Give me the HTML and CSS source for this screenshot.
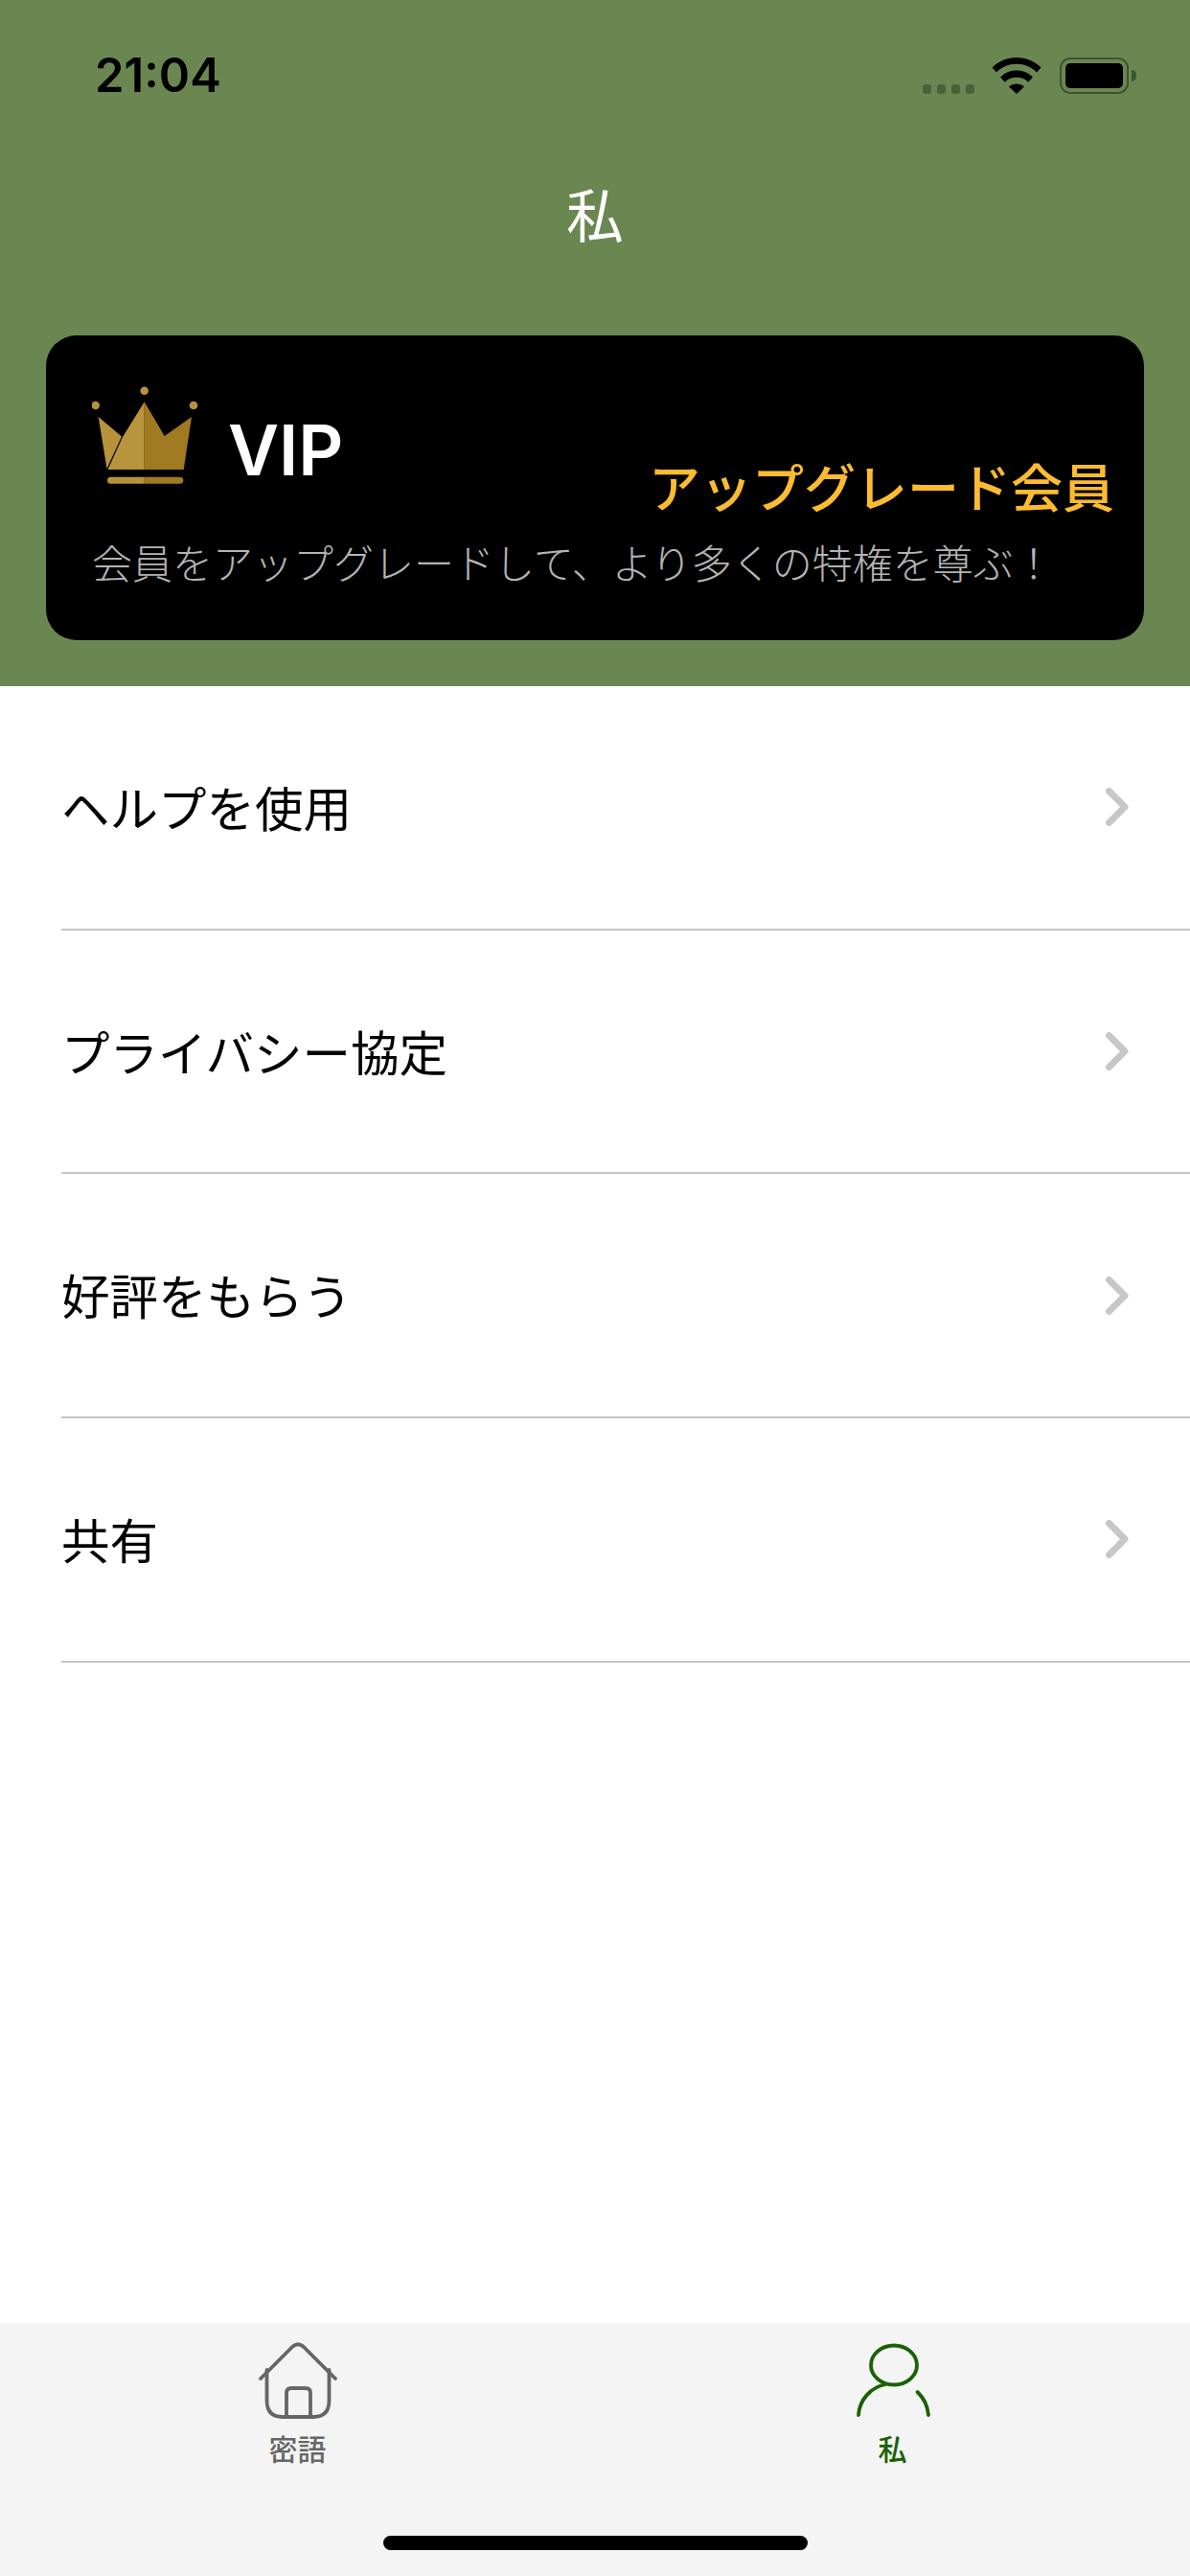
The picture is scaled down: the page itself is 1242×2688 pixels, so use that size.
FILE: index.html
```html
<!DOCTYPE html>
<html lang="ja">
<head>
<meta charset="utf-8">
<title>私</title>
<link rel="stylesheet" href="styles.css">
</head>
<body>
<div class="app">
  <header class="header">
    <div class="status">
      <span class="time">21:04</span>
      <div class="status-icons">
        <div class="signal"><i></i><i></i><i></i><i></i></div>
        <svg class="wifi" viewBox="0 0 52 38"><path d="M26 0C16 0 7.500 3.600 0.500 10.500L5 15.500C10.500 10 17.800 6.800 26 6.800S41.500 10 47 15.500L51.500 10.500C44.500 3.600 36 0 26 0Z"/><path d="M26 13.500C19.500 13.500 13.500 16 9 20.500L13.700 25.700C16.800 22.700 21 20.800 26 20.800S35.200 22.700 38.300 25.700L43 20.500C38.500 16 32.500 13.500 26 13.500Z"/><path d="M26 27.500C23 27.500 20 28.700 18 30.500L26 38L34 30.500C32 28.700 29 27.500 26 27.500Z"/></svg>
        <div class="battery"><div class="battery-shell"><div class="battery-fill"></div></div><div class="battery-nub"></div></div>
      </div>
    </div>
    <h1 class="title">私</h1>
    <section class="card">
      <div class="card-top">
        <svg class="crown" viewBox="0 0 112 104">
          <circle cx="3.700" cy="20" r="4.300" fill="#b8923a"/>
          <circle cx="54.700" cy="4.700" r="4.300" fill="#b8923a"/>
          <circle cx="106" cy="20" r="4.300" fill="#b8923a"/>
          <path d="M6.700 32L31 52.500L15.500 86Z" fill="#b8923a"/>
          <path d="M16.500 87L32 53L54.700 16.300V87Z" fill="#b8943c"/>
          <path d="M54.700 16.300L75.700 52L104 32L95.700 87H54.700Z" fill="#a07a20"/>
          <path d="M19.500 94.700H54.700V101.700H19.500A3.500 3.500 0 0 1 19.500 94.700Z" fill="#b8923a"/>
          <path d="M54.700 94.700H91.800A3.500 3.500 0 0 1 91.800 101.700H54.700Z" fill="#a07a20"/>
        </svg>
        <span class="vip">VIP</span>
        <span class="upgrade">アップグレード会員</span>
      </div>
      <p class="card-sub">会員をアップグレードして、より多くの特権を尊ぶ！</p>
    </section>
  </header>
  <main class="list">
    <a class="row"><span>ヘルプを使用</span><svg class="chev" viewBox="0 0 24 40"><path d="M3.500 3.500L20 20L3.500 36.500"/></svg></a>
    <a class="row"><span>プライバシー協定</span><svg class="chev" viewBox="0 0 24 40"><path d="M3.500 3.500L20 20L3.500 36.500"/></svg></a>
    <a class="row"><span>好評をもらう</span><svg class="chev" viewBox="0 0 24 40"><path d="M3.500 3.500L20 20L3.500 36.500"/></svg></a>
    <a class="row"><span>共有</span><svg class="chev" viewBox="0 0 24 40"><path d="M3.500 3.500L20 20L3.500 36.500"/></svg></a>
  </main>
  <nav class="tabs">
    <div class="tab">
      <svg class="tab-icon home" viewBox="0 0 84 84"><path d="M3 41L36.500 7.500Q42 3 47.500 7.500L81 41"/><path d="M9.500 35V67Q9.500 84 26 84H58Q74.500 84 74.500 67V35" transform="translate(0 -3)"/><path d="M30 81V56Q30 51 35 51H50Q55 51 55 56V81"/></svg>
      <span class="tab-label">密語</span>
    </div>
    <div class="tab active">
      <svg class="tab-icon person" viewBox="0 0 84 84"><ellipse cx="43" cy="27" rx="24" ry="20.500"/><path d="M6 79C7 63 19 50 34 47"/><path d="M67.500 55C74 61 78 69 79 79"/></svg>
      <span class="tab-label">私</span>
    </div>
    <div class="home-indicator"></div>
  </nav>
</div>
</body>
</html>
```
FILE: styles.css
```css
* { box-sizing: border-box; }
html, body { margin: 0; padding: 0; }
body {
  width: 1242px;
  height: 2688px;
  overflow: hidden;
  background: #fff;
  font-family: "Noto Sans CJK JP", "Noto Sans", sans-serif;
}
.app { display: flex; flex-direction: column; height: 2688px; }
.header {
  height: 716px;
  background: #6b8751;
  padding-top: 59px;
  display: flex;
  flex-direction: column;
  flex: none;
}
.status {
  height: 40px;
  padding: 0 56px 0 99px;
  display: flex;
  justify-content: space-between;
  align-items: center;
}
.time {
  font-family: Inter, sans-serif;
  font-weight: 600;
  font-size: 49px;
  line-height: 40px;
  letter-spacing: 0;
  color: #000;
}
.status-icons { display: flex; align-items: center; height: 40px; }
.signal { display: flex; gap: 6px; align-self: flex-end; padding-bottom: 1px; }
.signal i { display: block; width: 9px; height: 10px; border-radius: 3px; background: #4b6139; }
.wifi { display: block; width: 52px; height: 38px; margin-left: 18px; fill: #000; }
.battery { display: flex; align-items: center; margin-left: 19px; }
.battery-shell {
  width: 72px;
  height: 38px;
  padding: 4px;
  border: 2.500px solid #3f5430;
  border-radius: 11px;
}
.battery-fill { width: 100%; height: 100%; background: #000; border-radius: 5px; }
.battery-nub { width: 5px; height: 12px; margin-left: 3px; background: #3f5430; border-radius: 0 6px 6px 0; }
.title {
  margin: 0;
  height: 251px;
  padding-top: 80px;
  text-align: center;
  font-size: 60px;
  line-height: 86px;
  font-weight: 400;
  color: #fff;
}
.card {
  margin: 0 48px;
  height: 318px;
  background: #000;
  border-radius: 32px;
  padding: 50px 32px 0 48px;
}
.card-top { display: flex; align-items: flex-start; height: 161px; }
.crown { display: block; width: 112px; height: 104px; flex: none; margin-top: 3px; }
.vip {
  margin: 32px 0 0 30px;
  font-family: Inter, sans-serif;
  font-weight: 600;
  font-size: 73px;
  line-height: 76px;
  color: #fff;
}
.upgrade {
  margin: 77px -1px 0 auto;
  font-size: 54px;
  line-height: 60px;
  font-weight: 500;
  color: #fdbb30;
}
.card-sub {
  margin: 0;
  font-size: 42px;
  line-height: 50px;
  font-weight: 300;
  color: #b4b4b4;
  white-space: nowrap;
}
.list { flex: 1; }
.row {
  height: 254.700px;
  margin-left: 64px;
  padding: 0 64px 3px 0;
  display: flex;
  align-items: center;
  justify-content: space-between;
  border-bottom: 2px solid #c6c6c6;
  font-size: 50.500px;
  line-height: 68px;
  color: #000;
}
.chev { display: block; width: 24px; height: 40px; margin-top: 3px; fill: none; stroke: #c7c7c7; stroke-width: 7; stroke-linecap: round; stroke-linejoin: round; }
.tabs {
  position: relative;
  height: 264px;
  flex: none;
  background: #f4f4f4;
  display: grid;
  grid-template-columns: 1fr 1fr;
  align-items: start;
}
.tab { display: flex; flex-direction: column; align-items: center; padding-top: 17px; }
.tab-icon { display: block; width: 84px; height: 84px; fill: none; stroke-width: 3.800; stroke-linecap: round; stroke-linejoin: round; }
.home { stroke: #666; }
.person { stroke: #1a6105; }
.tab-label { font-size: 30px; line-height: 40px; margin-top: 9px; font-weight: 500; color: #666; }
.tab.active .tab-label { color: #1a6105; }
.home-indicator {
  position: absolute;
  left: 400px;
  top: 222px;
  width: 443px;
  height: 15px;
  border-radius: 8px;
  background: #000;
}
```
